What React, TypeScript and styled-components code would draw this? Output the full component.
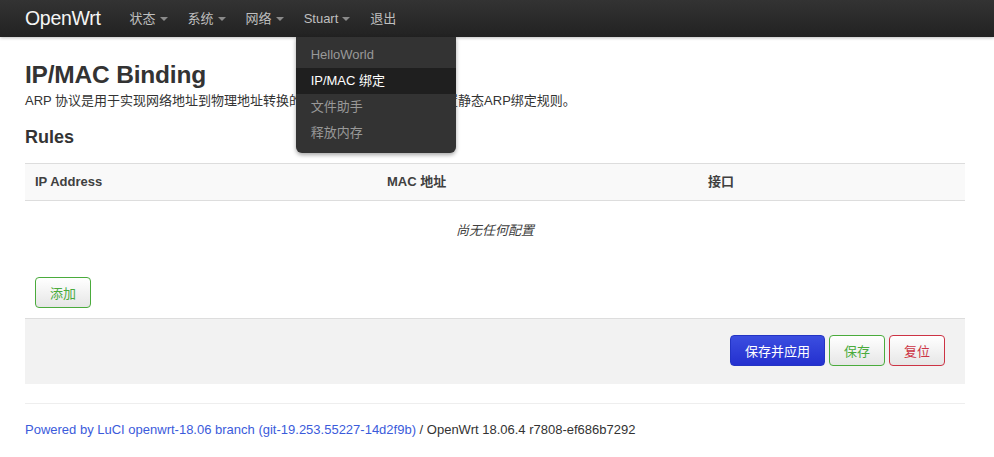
import React from "react";
import styled, { createGlobalStyle } from "styled-components";

const GlobalStyle = createGlobalStyle`
  html, body { margin: 0; padding: 0; background: #fff; }
  body {
    font-family: "Liberation Sans", "Noto Sans CJK SC", Arial, sans-serif;
    font-size: 13px;
    line-height: 18px;
    color: #404040;
  }
  * { box-sizing: border-box; }
`;

const TopBar = styled.header`
  height: 37px;
  background: linear-gradient(#333333, #222222);
  box-shadow: 0 1px 3px rgba(0, 0, 0, 0.25);
  display: flex;
  align-items: center;
  padding-left: 25px;
  position: relative;
  z-index: 5;
`;

const Brand = styled.a`
  color: #f5f5f5;
  font-size: 19.5px;
  font-weight: 200;
  letter-spacing: -0.3px;
  margin-right: 19px;
  line-height: 37px;
  text-decoration: none;
`;

const NavList = styled.ul`
  display: flex;
  list-style: none;
  margin: 0;
  padding: 0;
  height: 37px;
`;

const NavItem = styled.li`
  position: relative;
  display: flex;
  align-items: center;
  padding: 0 10px;
  color: #bfbfbf;
  font-size: 13px;
  line-height: 37px;
`;

const Caret = styled.span`
  display: inline-block;
  width: 0;
  height: 0;
  margin-left: 4px;
  margin-top: 1px;
  border-left: 4px solid transparent;
  border-right: 4px solid transparent;
  border-top: 4px solid #8a8a8a;
`;

const Dropdown = styled.ul`
  position: absolute;
  top: 37px;
  left: 2px;
  width: 160px;
  margin: 0;
  padding: 5px 0 7px;
  list-style: none;
  background: #333333;
  border-radius: 0 0 6px 6px;
  box-shadow: 0 2px 4px rgba(0, 0, 0, 0.35);
`;

const DropItem = styled.li<{ $active?: boolean }>`
  height: 26px;
  line-height: 26px;
  padding-left: 15px;
  font-size: 13px;
  color: ${(p) => (p.$active ? "#ffffff" : "#999999")};
  background: ${(p) => (p.$active ? "#1f1f1f" : "transparent")};
`;

const Main = styled.main`
  width: 940px;
  margin-left: 25px;
  padding-top: 24px;
`;

const Title = styled.h2`
  margin: 0;
  font-size: 24.5px;
  line-height: 28px;
  font-weight: bold;
  color: #333;
  letter-spacing: -0.2px;
`;

const Desc = styled.p`
  margin: 3px 0 0;
  font-size: 13px;
  line-height: 18px;
  color: #333;
`;

const SectionTitle = styled.h3`
  margin: 15px 0 0;
  font-size: 18px;
  line-height: 24px;
  font-weight: bold;
  color: #333;
`;

const Table = styled.div`
  margin-top: 14px;
  border-top: 1px solid #dddddd;
`;

const HeadRow = styled.div`
  display: grid;
  grid-template-columns: 352px 321px 1fr;
  height: 37px;
  align-items: center;
  background: #f9f9f9;
  border-bottom: 1px solid #dddddd;
`;

const HeadCell = styled.div`
  padding-left: 10px;
  font-weight: bold;
  font-size: 13px;
  color: #404040;
`;

const EmptyRow = styled.div`
  height: 60px;
  display: flex;
  align-items: center;
  justify-content: center;
  font-style: italic;
  font-size: 13px;
  color: #404040;
`;

const AddRow = styled.div`
  padding: 16px 10px 10px;
`;

const Btn = styled.button<{ $tone: "green" | "red" | "blue" }>`
  height: 31px;
  padding: 0 14px;
  font-family: inherit;
  font-size: 13px;
  border-radius: 4px;
  cursor: pointer;
  border: 1px solid
    ${(p) => (p.$tone === "green" ? "#4aab3c" : p.$tone === "red" ? "#cc3344" : "#2334c4")};
  color: ${(p) => (p.$tone === "green" ? "#4aab3c" : p.$tone === "red" ? "#cc3344" : "#ffffff")};
  background: ${(p) =>
    p.$tone === "blue"
      ? "linear-gradient(#3b4ee0, #2430cf)"
      : "linear-gradient(#ffffff, #e6e6e6)"};
`;

const ActionBar = styled.div`
  height: 66px;
  background: #f2f2f2;
  border-top: 1px solid #dddddd;
  display: flex;
  justify-content: flex-end;
  align-items: center;
  gap: 4px;
  padding: 0 20px 2px 0;
`;

const FooterRule = styled.hr`
  margin: 19px 0 0;
  border: 0;
  border-top: 1px solid #eeeeee;
`;

const Footer = styled.footer`
  padding-top: 17px;
  font-size: 13px;
  color: #333;
`;

const FooterLink = styled.a`
  color: #3b5bdb;
  text-decoration: none;
`;

export default function App() {
  return (
    <>
      <GlobalStyle />
      <TopBar>
        <Brand>OpenWrt</Brand>
        <NavList>
          <NavItem>
            状态<Caret />
          </NavItem>
          <NavItem>
            系统<Caret />
          </NavItem>
          <NavItem>
            网络<Caret />
          </NavItem>
          <NavItem>
            Stuart<Caret />
            <Dropdown>
              <DropItem>HelloWorld</DropItem>
              <DropItem $active>IP/MAC 绑定</DropItem>
              <DropItem>文件助手</DropItem>
              <DropItem>释放内存</DropItem>
            </Dropdown>
          </NavItem>
          <NavItem>退出</NavItem>
        </NavList>
      </TopBar>
      <Main>
        <Title>IP/MAC Binding</Title>
        <Desc>ARP 协议是用于实现网络地址到物理地址转换的协议。在这里，你可以设置静态ARP绑定规则。</Desc>
        <SectionTitle>Rules</SectionTitle>
        <Table>
          <HeadRow>
            <HeadCell>IP Address</HeadCell>
            <HeadCell>MAC 地址</HeadCell>
            <HeadCell>接口</HeadCell>
          </HeadRow>
          <EmptyRow>尚无任何配置</EmptyRow>
        </Table>
        <AddRow>
          <Btn $tone="green">添加</Btn>
        </AddRow>
        <ActionBar>
          <Btn $tone="blue">保存并应用</Btn>
          <Btn $tone="green">保存</Btn>
          <Btn $tone="red">复位</Btn>
        </ActionBar>
        <FooterRule />
        <Footer>
          <FooterLink>Powered by LuCI openwrt-18.06 branch (git-19.253.55227-14d2f9b)</FooterLink> / OpenWrt
          18.06.4 r7808-ef686b7292
        </Footer>
      </Main>
    </>
  );
}
